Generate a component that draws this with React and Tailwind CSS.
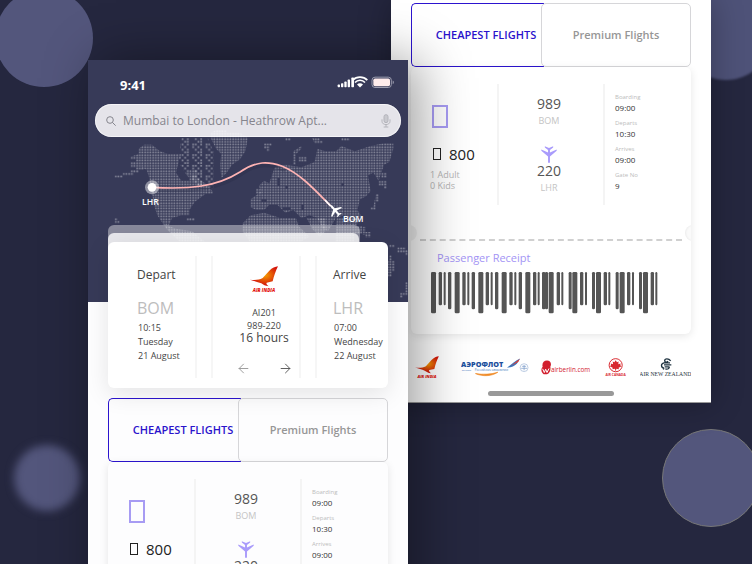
import React, { useState } from "react";
import { MdLocalAirport } from "react-icons/md";
import { FiArrowLeft, FiArrowRight } from "react-icons/fi";

const times = [
  { label: "Boarding", value: "09:00" },
  { label: "Departs", value: "10:30" },
  { label: "Arrives", value: "09:00" },
  { label: "Gate No", value: "9" },
];

// x, width and height of every bar
const bars = [
  [0, 15, 124], [23, 10, 100], [38, 6, 100], [51, 10, 112],
  [71, 15, 124], [94, 10, 100], [109, 6, 100], [122, 10, 112],
  [142, 15, 124], [164, 10, 100], [179, 6, 100], [192, 10, 112],
  [212, 15, 124], [235, 10, 100], [250, 6, 100], [263, 10, 112],
  [283, 15, 124], [306, 10, 100], [320, 6, 100], [333, 10, 112], [342, 9, 112],
  [353, 15, 124], [377, 10, 100], [391, 6, 100], [413, 9, 112],
  [424, 15, 124], [447, 10, 100], [462, 6, 100], [483, 9, 112],
  [495, 15, 124], [518, 10, 100], [532, 6, 100], [554, 9, 112],
  [566, 15, 124], [588, 10, 100], [603, 6, 100], [624, 9, 112],
  [636, 15, 124], [659, 10, 100], [673, 6, 100],
];

const AirIndia = ({ className }) => (
  <svg viewBox="0 0 84 78" className={className} role="img" aria-label="Air India">
    <defs>
      <radialGradient id="wing" cx="0.55" cy="0.45" r="0.5">
        <stop offset="0" stopColor="#f59a00" />
        <stop offset="1" stopColor="#d4150c" />
      </radialGradient>
    </defs>
    <path
      d="M84 1 C76 2 66 6 58 14 L38 36 C26 43 12 42 0 41 C12 45 24 48 34 52 C40 56 46 60 56 61 C50 56 48 53 50 50 L68 46 C72 30 77 14 84 1Z"
      fill="url(#wing)"
    />
    <text x="42" y="77" textAnchor="middle" fontSize="14" fontWeight="800" fontStyle="italic" fill="#e3120b">
      AIR INDIA
    </text>
  </svg>
);

const Aeroflot = () => (
  <svg viewBox="0 0 210 60" className="h-5 w-[69px]" role="img" aria-label="Aeroflot">
    <text x="0" y="30" fontSize="22" fontWeight="800" fill="#1c4f9c">АЭРОФЛОТ</text>
    <path d="M140 32 C152 24 164 10 180 4 L170 20 C162 28 152 31 140 32Z" fill="#3c76bd" />
    <path d="M152 26 L179 5 L174 15Z" fill="#e03c31" />
    <path d="M44 50 C66 60 94 58 112 46 C94 52 66 54 44 50Z" fill="#f08a24" stroke="#f08a24" strokeWidth="2" />
    <text x="2" y="42" fontSize="7" fill="#3c76bd">SkyTeam</text>
    <text x="42" y="43" fontSize="9" fill="#3c76bd">Российские авиалинии</text>
    <circle cx="192" cy="32" r="12" fill="none" stroke="#9db4d6" strokeWidth="2" />
    <path d="M183 34 h18 M186 28 h12 M192 24 v16" stroke="#6f92c4" strokeWidth="2" />
  </svg>
);

const AirBerlin = () => (
  <svg viewBox="0 0 153 44" className="h-[15px] w-[51px]" role="img" aria-label="airberlin">
    <path d="M8 42 C0 36 -1 26 5 20 C2 10 8 1 18 1 C28 1 33 10 28 20 C30 30 26 40 18 42Z" fill="#d2202f" />
    <path d="M5 26 L10 37 L14 27 L18 37 L24 25" fill="none" stroke="#fff" strokeWidth="3" />
    <text x="30" y="36" fontSize="19" fontWeight="500" fill="#d2202f">airberlin.com</text>
  </svg>
);

const AirCanada = () => (
  <svg viewBox="0 0 78 58" className="h-[19px] w-[26px]" role="img" aria-label="Air Canada">
    <circle cx="38" cy="22" r="20" fill="none" stroke="#d8292f" strokeWidth="3" />
    <path
      d="M38 7 L42 13 L47 11 L46 19 L53 17 L52 22 L56 25 L47 30 L48 34 L40 33 L39 39 L37 39 L36 33 L28 34 L29 30 L20 25 L24 22 L23 17 L30 19 L29 11 L34 13Z"
      fill="#d8292f"
    />
    <text x="38" y="56" textAnchor="middle" fontSize="10" fontWeight="700" fill="#d8292f">AIR CANADA</text>
  </svg>
);

const AirNewZealand = () => (
  <svg viewBox="0 0 153 56" className="h-[19px] w-[51px]" role="img" aria-label="Air New Zealand">
    <path
      d="M92 8 C86 0 74 0 74 8 C74 13 82 13 84 9 M90 14 H72 C62 16 62 28 72 30 M94 20 H72 M88 26 H74 M76 32 C84 34 88 31 88 26 M72 30 L70 34"
      fill="none"
      stroke="#1f3340"
      strokeWidth="4"
    />
    <text
      x="76"
      y="53"
      textAnchor="middle"
      fontSize="17"
      fill="#1f3340"
      className="font-['Liberation_Serif',serif]"
    >
      AIR NEW ZEALAND
    </text>
  </svg>
);

const WorldMap = () => (
  <svg viewBox="0 0 960 726" className="pointer-events-none absolute inset-x-0 top-0 w-full" aria-hidden="true">
    <defs>
      <pattern id="dots" width="8" height="8" patternUnits="userSpaceOnUse">
        <rect x="1" y="1" width="5" height="5" rx="1" fill="#fff" fillOpacity="0.42" />
      </pattern>
      <pattern id="sparse" width="40" height="32" patternUnits="userSpaceOnUse">
        <path
          d="M1 1h5v5h-5z M33 1h5v5h-5z M1 9h5v5h-5z M17 9h5v5h-5z M25 9h5v5h-5z M17 17h5v5h-5z M33 17h5v5h-5z M1 25h5v5h-5z M25 25h5v5h-5z"
          fill="#fff"
          fillOpacity="0.4"
        />
      </pattern>
    </defs>
    <g transform="translate(-24 210)">
      <g fill="url(#dots)">
        {/* americas */}
        <path d="M152 112 V96 H168 V88 H152 V80 L176 72 V56 L192 44 H216 L240 64 L264 72 H296 V96 L288 128 L304 152 L328 152 V120 H352 V144 L376 160 L398 184 V192 H376 L344 216 L328 240 V256 H304 L276 264 L266 288 L288 296 L336 304 L376 336 L300 336 L262 300 L248 280 L232 256 L224 232 L216 192 L208 144 L200 120 L184 112Z" />
        <path d="M320 264 h24 v8 h-24z M104 264 h8 v8 h8 v8 h-16z M104 136 h24 v8 h-24z M128 128 h32 v8 h-32z M152 120 h24 v8 h-24z M168 112 h24 v8 h-24z" />
        {/* greenland */}
        <path d="M392 24 V8 L408 0 H440 V8 H480 L504 24 L496 64 L480 88 L456 104 L440 128 L424 144 L420 104 L424 72 L408 56Z" />
        <path d="M552 40 h24 v8 h-8 v16 h-8 v-8 h-8z M616 24 h16 v8 h-16z M696 24 h24 v8 h8 v8 h-24z M784 24 h24 v8 h-24z M640 64 l24 -16 v8 l-16 16 v32 h-8z" />
        {/* europe and asia */}
        <path d="M512 232 V208 L544 184 L536 168 L552 152 L568 160 L584 112 L616 104 L664 112 L704 96 L712 56 L736 64 H768 L784 48 L824 64 L872 48 L912 40 L940 40 V56 L928 96 L912 104 L904 128 L896 152 L880 128 L864 136 L872 184 L856 200 L840 208 L832 240 L848 264 L832 280 L808 272 L792 256 L768 264 L744 304 L728 296 L712 264 L688 256 L664 264 L640 240 L616 248 L592 224 L568 224 L552 240 L528 240Z" />
        <path d="M896 152 h24 v24 h-8 v-8 h-16z M888 192 h8 v24 h-8 v24 h-16 v-8 h8z M904 128 h16 v16 h-16z M528 176 h16 v16 h-16z M656 80 h24 v16 h-24z" />
        {/* africa */}
        <path d="M488 304 V280 L512 256 L552 248 L576 256 L600 264 L648 264 L656 288 L688 320 L660 336 H510Z" />
        <path d="M680 264 h56 v40 l-16 16 l-24 -24z M770 264 h60 v24 h16 v24 h-24 v24 h-56z M848 290 h8 v16 h16 v16 h-16 v-8 h-8z" />
        {/* oceania */}
        <path d="M928 344 h16 v8 h-16z M952 352 h24 v8 h8 v16 h-8 v-8 h-24z M928 376 h8 v16 h8 v32 h-8 v16 h-16 v-48 h8z M976 456 h8 v24 h-8z M960 488 h16 v-8 h8 v16 h-16 v8 h-8z" />
      </g>
      <path d="M304 24 H384 L400 64 L400 176 L352 168 L320 136 L296 96Z" fill="url(#sparse)" />
      {/* seas inside the continents */}
      <path
        d="M608 232 h24 v8 h-24z M664 224 h8 v16 h-8z M616 168 h8 v8 h-8z M784 160 h8 v8 h-8z M544 208 h16 v8 h-16z M592 144 h8 v24 h-8z"
        fill="#373a58"
      />
      <path d="M235 180 C340 186 420 176 485 132 C530 100 570 100 615 122" fill="none" stroke="#20233d" strokeOpacity="0.2" strokeWidth="10" />
      <path d="M215 172 C330 179 410 170 480 126 C530 92 565 94 605 108 C660 130 705 180 752 228" fill="none" stroke="#ffb4b4" strokeWidth="5" />
      <path d="M735 210 L752 228" stroke="#fff" strokeWidth="5" />
      <circle cx="216" cy="172" r="21" fill="#fff" fillOpacity="0.45" />
      <circle cx="216" cy="172" r="13" fill="#fff" />
      <g transform="rotate(-42 767 243)">
        <MdLocalAirport x="743" y="217" size="48" color="#fff" />
      </g>
      <g fill="#fff" fontSize="26" fontWeight="600">
        <text x="186" y="224">LHR</text>
        <text x="789" y="277">BOM</text>
      </g>
    </g>
  </svg>
);

const StatusBar = () => (
  <div className="flex h-11 items-center justify-between pt-1 pr-[13px] pl-8">
    <span className="pt-1 text-[13px] font-bold text-white">9:41</span>
    <svg viewBox="0 0 174 38" className="mb-1 h-[13px] w-[58px]" aria-hidden="true">
      <g fill="#fff">
        <rect x="2" y="25" width="7" height="8" rx="2" />
        <rect x="12" y="21" width="7" height="12" rx="2" />
        <rect x="22" y="16" width="7" height="17" rx="2" />
        <rect x="32" y="10" width="7" height="23" rx="2" />
        <rect x="43" y="4" width="8" height="29" rx="2" />
        <path d="M69 34 L60 25 C65 20 73 20 78 25Z" />
      </g>
      <path d="M54 19 C62 10 76 10 84 19 M47 12 C59 0 79 0 91 12" fill="none" stroke="#fff" strokeWidth="5" />
      <rect x="105" y="3" width="58" height="31" rx="9" fill="none" stroke="#9a9bad" strokeWidth="3" />
      <rect x="109" y="7" width="50" height="23" rx="5" fill="#ffeceb" />
      <path d="M167 13 C172 15 172 22 167 24Z" fill="#9a9bad" />
    </svg>
  </div>
);

const SearchBar = () => {
  const [query, setQuery] = useState("Mumbai to London - Heathrow Apt...");

  return (
    <label className="mx-[7px] flex h-[33px] items-center rounded-full bg-[#e5e4ea] pr-2.5 pl-[11px] ring-1 ring-white/60 ring-inset">
      <svg viewBox="0 0 30 30" className="size-2.5 shrink-0" fill="none" stroke="#85858d" strokeWidth="3">
        <circle cx="12" cy="12" r="10" />
        <path d="M19 19 L29 29" />
      </svg>
      <input
        type="text"
        aria-label="Search flights"
        value={query}
        onChange={(e) => setQuery(e.target.value)}
        className="ml-[7px] min-w-0 flex-1 bg-transparent text-xs text-[#85858d] outline-none"
      />
      <svg viewBox="0 0 30 42" className="h-3.5 w-2.5 shrink-0" fill="none" stroke="#b4b4bb" strokeWidth="3">
        <rect x="9" y="2" width="12" height="24" rx="6" fill="#c9c9cf" />
        <path d="M3 16 V22 C3 35 27 35 27 22 V16 M15 32 V39 M8 39 H22" />
      </svg>
    </label>
  );
};

const Stop = ({ title, code, time, day, date }) => (
  <div className="pt-2.5 text-[9px] leading-[14px] whitespace-nowrap text-[#444]">
    <h2 className="text-xs leading-[18px]">{title}</h2>
    <p className="mt-3.5 text-base leading-5 text-[#bdbdbd]">{code}</p>
    <p className="mt-[3px] pl-px">{time}</p>
    <p className="pl-px">{day}</p>
    <p className="pl-px">{date}</p>
  </div>
);

const FlightCard = () => (
  <section className="relative mx-5 -mt-[60px]">
    <div className="absolute -top-[17px] right-7 left-0 h-24 rounded-md bg-white/40" />
    <div className="absolute -top-[9px] right-[29px] left-0 h-24 rounded-md bg-white/80" />
    <div className="relative flex gap-3.5 rounded-md bg-white pt-3.5 pb-2.5 shadow-[0_6px_24px_rgba(0,0,0,0.1)]">
      <div className="w-[89px] border-r-2 border-[#f6f6f6] pl-[29px]">
        <Stop title="Depart" code="BOM" time="10:15" day="Tuesday" date="21 August" />
      </div>
      <div className="flex flex-1 flex-col items-center border-x-2 border-[#f6f6f6] pt-2.5 pb-0.5 pl-4 text-[9px] leading-[13px] text-[#444]">
        <AirIndia className="h-[26px] w-7" />
        <p className="mt-3.5">AI201</p>
        <p>989-220</p>
        <p className="text-xs leading-3">16 hours</p>
        <div className="mt-[17px] flex gap-[27px]">
          <button type="button" aria-label="Previous flight">
            <FiArrowLeft size={15} color="#999" strokeWidth={1.5} />
          </button>
          <button type="button" aria-label="Next flight">
            <FiArrowRight size={15} color="#555" strokeWidth={1.5} />
          </button>
        </div>
      </div>
      <div className="w-[73px] border-l-2 border-[#f6f6f6] pl-4">
        <Stop title="Arrive" code="LHR" time="07:00" day="Wednesday" date="22 August" />
      </div>
    </div>
  </section>
);

const FareTabs = () => {
  const [tab, setTab] = useState("cheapest");

  return (
    <div role="tablist" className="mx-5 flex h-16">
      <button
        type="button"
        role="tab"
        aria-selected={tab === "cheapest"}
        onClick={() => setTab("cheapest")}
        className="w-[133px] rounded-l-[5px] border border-r-0 border-[#2c14cf] pl-4 text-[11px] font-semibold whitespace-nowrap text-[#2a12cc]"
      >
        CHEAPEST FLIGHTS
      </button>
      <button
        type="button"
        role="tab"
        aria-selected={tab === "premium"}
        onClick={() => setTab("premium")}
        className="-ml-[3px] flex-1 rounded-[5px] border border-[#d6d6d9] text-[11px] font-semibold text-[#969696]"
      >
        Premium Flights
      </button>
    </div>
  );
};

const Ticket = () => (
  <section className="relative mx-5 overflow-hidden rounded-md pt-[17px] pb-5 shadow-[0_2px_8px_rgba(0,0,0,0.1)]">
    <div className="flex h-[121px]">
      <div className="w-[88px] border-r-2 border-[#f4f4f4] pt-[21px] pl-[19px] text-[9px] leading-[11px] text-[#b5b5b5]">
        <div className="ml-0.5 h-[23px] w-4 border-2 border-[#a79bf3]" />
        <p className="mt-4 flex items-center pl-[3px] text-[15px] leading-5 text-[#222]">
          <span className="mr-2 h-3 w-2 border border-[#222]" />
          800
        </p>
        <p className="mt-[5px]">1 Adult</p>
        <p>0 Kids</p>
      </div>
      <div className="flex flex-1 flex-col items-center pt-2.5 pr-1 text-[9px] leading-3 text-[#c4c4c4]">
        <p className="text-sm leading-5 text-[#555]">989</p>
        <p className="mt-px">BOM</p>
        <svg viewBox="0 0 50 52" className="mt-[19px] h-[17px] w-4 shrink-0" fill="#a99bfb" aria-hidden="true">
          <path d="M12 0 L25 6 L38 0 V4 L28 12 V20 L49 10 V14 L28 32 V52 H22 V32 L1 14 V10 L22 20 V12 L12 4Z" />
        </svg>
        <p className="text-sm leading-4 text-[#555]">220</p>
        <p className="mt-[3px]">LHR</p>
      </div>
      <dl className="flex w-[88px] flex-col gap-1 border-l-2 border-[#f4f4f4] pt-2 pl-2.5">
        {times.map((item) => (
          <div key={item.label}>
            <dt className="text-[6px] leading-[10px] text-[#bcbcbc]">{item.label}</dt>
            <dd className="text-[8px] leading-3 text-[#333]">{item.value}</dd>
          </div>
        ))}
      </dl>
    </div>
    <div className="mx-[9px] mt-[34px] border-t-2 border-dashed border-[#d0d0d0]" />
    <div className="absolute top-[158px] -left-2.5 size-4 rounded-full bg-black/5" />
    <div className="absolute top-[158px] -right-2.5 size-4 rounded-full bg-[#fafafa] shadow-[inset_1px_0_2px_rgba(0,0,0,0.06)]" />
    <h3 className="mt-[7px] pl-[26px] text-[11px] leading-5 text-[#a394f5]">Passenger Receipt</h3>
    <svg viewBox="0 0 681 126" className="mt-1 ml-5 h-[42px] w-[227px]" role="img" aria-label="Barcode">
      {bars.map(([x, width, height]) => (
        <rect key={x} x={x} y="0" width={width} height={height} rx="4" fill="#555" />
      ))}
    </svg>
  </section>
);

const App = () => {
  return (
    <main className="relative flex h-screen items-start overflow-hidden bg-[#25273f] pr-[41px] pl-[88px] font-['Open_Sans','Noto_Sans',sans-serif]">
      <div className="absolute -top-[11px] -left-[5px] size-[98px] rounded-full bg-[#53567c]" />
      <div className="absolute bottom-[53px] left-[14px] size-[66px] rounded-full bg-[#53567c] blur-[4px]" />
      <div className="absolute -top-[12px] -right-5 size-[92px] rounded-full bg-[#4e5278] blur-[1px]" />
      <div className="absolute -right-2 bottom-[37px] size-[98px] rounded-full border border-[#777] bg-[#53567c]" />

      <div className="relative z-10 mt-[60px] flex-1 bg-[#fdfdfe] shadow-[10px_0_50px_rgba(0,0,0,0.4)]">
        <header className="relative h-[242px] bg-[#373a58]">
          <StatusBar />
          <SearchBar />
          <WorldMap />
        </header>
        <FlightCard />
        <div className="mt-2.5">
          <FareTabs />
          <Ticket />
        </div>
      </div>

      <div className="relative -ml-[17px] flex-1 border-b border-[#999] bg-white pt-[3px] pb-1.5 shadow-[0_0_30px_rgba(0,0,0,0.3)]">
        <FareTabs />
        <Ticket />
        <div className="mx-5 mt-[21px] flex h-6 items-center pl-1">
          <AirIndia className="h-[22px] w-6" />
          <div className="flex flex-1 items-center justify-between pl-[22px]">
            <Aeroflot />
            <AirBerlin />
            <AirCanada />
            <AirNewZealand />
          </div>
        </div>
        <div className="mx-auto mt-3 h-[5px] w-[126px] rounded-full bg-[#999]" />
      </div>
    </main>
  );
};

export default App;
